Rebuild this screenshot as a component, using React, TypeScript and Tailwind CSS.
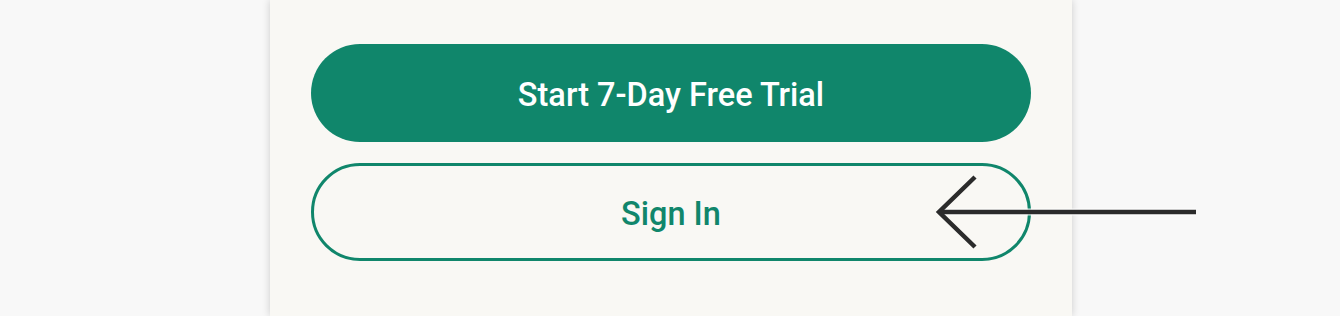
import React from "react";

export default function App() {
  return (
    <div className="relative w-[1340px] h-[316px] bg-[#f8f8f8] overflow-hidden" style={{ fontFamily: "Roboto, 'Noto Sans', sans-serif" }}>
      <div className="ml-[270px] w-[802px] h-[316px] bg-[#f9f8f4] shadow-[0_0_8px_rgba(0,0,0,0.18)] px-[41px] pt-[44px] flex flex-col gap-[21px]">
        <button className="h-[98px] w-full rounded-full bg-[#10866b] text-white text-[32.5px] font-medium pt-[4px]">
          Start 7-Day Free Trial
        </button>
        <button className="h-[98px] w-full rounded-full border-[3px] border-[#10866b] text-[#10866b] text-[32.5px] font-medium pt-[4px]">
          Sign In
        </button>
      </div>
      <svg className="absolute left-0 top-0 pointer-events-none" width="1340" height="316" viewBox="0 0 1340 316">
        <g fill="none" stroke="#ffffff" strokeWidth="7" strokeLinecap="butt" opacity="0.8">
          <line x1="942" y1="212" x2="1196" y2="212" />
        </g>
        <g fill="none" stroke="#2b2b2b" strokeWidth="4.5" strokeLinecap="butt">
          <line x1="940" y1="212" x2="1196" y2="212" />
          <polyline points="975,177 939,212 975,247" strokeLinejoin="miter" />
        </g>
      </svg>
    </div>
  );
}
